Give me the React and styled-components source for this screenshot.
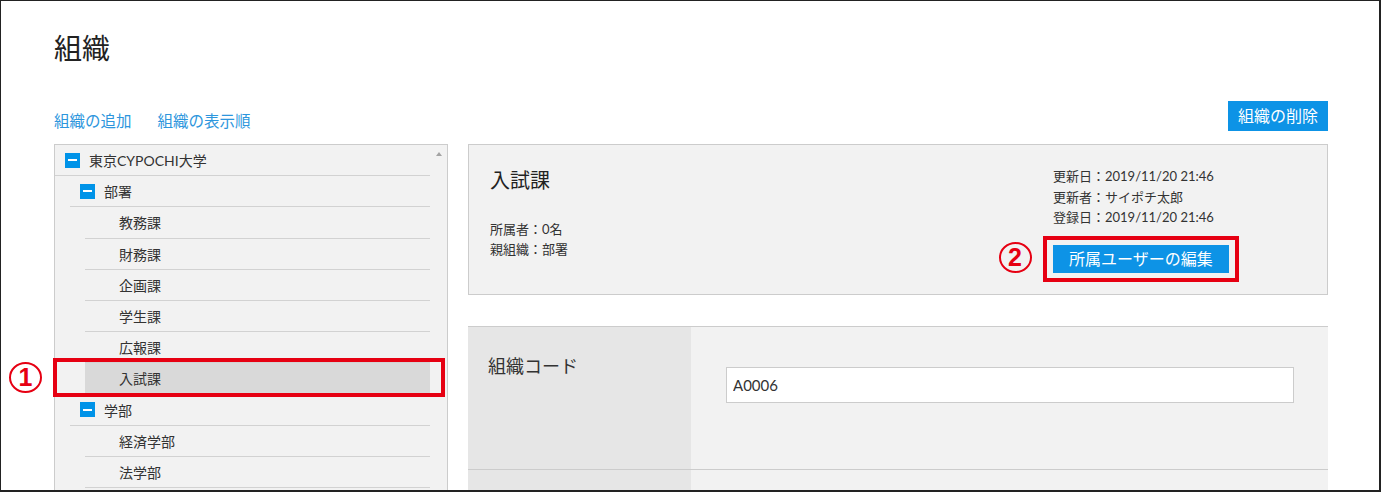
import React from "react";
import styled, { createGlobalStyle } from "styled-components";

const Global = createGlobalStyle`
  html, body { margin: 0; padding: 0; background: #fff; }
  body { font-family: Lato, "Noto Sans CJK JP", "Noto Sans", sans-serif; color: #333; }
  * { box-sizing: border-box; }
`;

const Frame = styled.div`
  width: 1381px;
  height: 492px;
  border-style: solid;
  border-color: #222;
  border-width: 1px 2px 2px 1px;
  padding: 0 51px 0 53px;
  overflow: hidden;
  background: #fff;
`;

const Title = styled.h1`
  margin: 0;
  padding-top: 30px;
  font-size: 28px;
  font-weight: 400;
  line-height: 34px;
  color: #222;
`;

const Toolbar = styled.div`
  margin-top: 36px;
  display: flex;
  justify-content: space-between;
  align-items: flex-start;
  height: 30px;
`;

const Links = styled.div`
  display: flex;
  gap: 26px;
  padding-top: 9px;
`;

const TextLink = styled.a`
  font-size: 15.5px;
  line-height: 23px;
  color: #2d96dd;
  text-decoration: none;
  cursor: pointer;
`;

const BlueButton = styled.button`
  border: none;
  background: #0d93e6;
  color: #fff;
  font-family: inherit;
  font-size: 16px;
  height: ${(p) => p.$h}px;
  padding: 0 ${(p) => p.$px}px;
  line-height: ${(p) => p.$h}px;
  cursor: pointer;
  white-space: nowrap;
`;

const Main = styled.div`
  margin-top: 13px;
  display: grid;
  grid-template-columns: 394px 1fr;
  column-gap: 20px;
  align-items: start;
`;

const TreePanel = styled.div`
  border: 1px solid #ccc;
  background: #f2f2f2;
  height: 420px;
  display: flex;
`;

const TreeList = styled.ul`
  list-style: none;
  margin: 0;
  padding: 0;
  flex: 1;
`;

const ScrollBar = styled.div`
  width: 17px;
  display: flex;
  justify-content: center;
  padding-top: 7px;
`;

const UpArrow = styled.div`
  width: 0;
  height: 0;
  border-left: 3.5px solid transparent;
  border-right: 3.5px solid transparent;
  border-bottom: 4px solid #a3a3a3;
`;

const Row = styled.li`
  position: relative;
  display: flex;
  align-items: center;
  gap: 9px;
  height: 31.2px;
  margin-left: ${(p) => p.$level * 15}px;
  padding-left: 10px;
  border-bottom: 1px solid ${(p) => (p.$selected ? "#d9d9d9" : "#d2d2d2")};
  background: ${(p) => (p.$selected ? "#d9d9d9" : "transparent")};
  font-size: 14px;
  color: #333;
`;

const Toggle = styled.span`
  position: relative;
  flex: none;
  width: 15px;
  height: 15px;
  background: ${(p) => (p.$leaf ? "transparent" : "#0093e8")};
  &::after {
    content: "";
    display: ${(p) => (p.$leaf ? "none" : "block")};
    position: absolute;
    left: 3px;
    top: 6.5px;
    width: 9px;
    height: 2px;
    background: #fff;
  }
`;

const RedBox = styled.div`
  position: absolute;
  left: ${(p) => p.$l}px;
  top: ${(p) => p.$t}px;
  right: ${(p) => p.$r}px;
  bottom: ${(p) => p.$b}px;
  border: 4px solid #e60012;
  pointer-events: none;
`;

const Badge = styled.span`
  position: absolute;
  left: ${(p) => p.$l}px;
  top: ${(p) => p.$t}px;
  width: 33px;
  height: 31px;
  border: 2px solid #e60012;
  border-radius: 50%;
  color: #e60012;
  font-family: "Liberation Sans", Arial, sans-serif;
  font-weight: 700;
  font-size: 25px;
  line-height: 27px;
  text-align: center;
`;

const RightCol = styled.div`
  display: flex;
  flex-direction: column;
`;

const InfoBox = styled.div`
  border: 1px solid #ccc;
  background: #f2f2f2;
  display: flex;
  justify-content: space-between;
  padding: 0 94px 12px 21px;
`;

const InfoMain = styled.div`
  padding-top: 23px;
`;

const InfoTitle = styled.div`
  font-size: 20px;
  line-height: 24px;
  color: #222;
`;

const MetaList = styled.div`
  margin-top: ${(p) => p.$mt}px;
  font-size: 13px;
  line-height: ${(p) => p.$lh}px;
  color: #333;
  white-space: nowrap;
`;

const InfoSide = styled.div`
  width: 180px;
  padding-top: 21px;
  display: flex;
  flex-direction: column;
  align-items: flex-start;
`;

const EditHighlight = styled.div`
  position: relative;
  margin-top: 8.5px;
  margin-left: -10.5px;
  border: 4px solid #e60012;
  padding: 5px 6.5px;
`;

const FormTable = styled.div`
  margin-top: 31px;
  border-top: 1px solid #ccc;
`;

const FormRow = styled.div`
  display: grid;
  grid-template-columns: 223px 1fr;
  height: ${(p) => p.$h}px;
  border-bottom: 1px solid #ccc;
`;

const Label = styled.div`
  background: #e6e6e6;
  padding: 26px 20px 0;
  font-size: 18px;
  line-height: 27px;
  color: #333;
`;

const Value = styled.div`
  background: #f2f2f2;
  padding: 40px 34px 0 35px;
`;

const TextInput = styled.input`
  display: block;
  width: 100%;
  height: 36px;
  border: 1px solid #ccc;
  background: #fff;
  padding: 0 6px;
  font-family: Lato, "Noto Sans CJK JP", sans-serif;
  font-size: 15px;
  color: #333;
  outline: none;
`;

const tree = [
  { label: "東京CYPOCHI大学", level: 0 },
  { label: "部署", level: 1 },
  { label: "教務課", level: 2, leaf: true },
  { label: "財務課", level: 2, leaf: true },
  { label: "企画課", level: 2, leaf: true },
  { label: "学生課", level: 2, leaf: true },
  { label: "広報課", level: 2, leaf: true },
  { label: "入試課", level: 2, leaf: true, selected: true },
  { label: "学部", level: 1 },
  { label: "経済学部", level: 2, leaf: true },
  { label: "法学部", level: 2, leaf: true },
];

export default function App() {
  return (
    <>
      <Global />
      <Frame>
        <Title>組織</Title>
        <Toolbar>
          <Links>
            <TextLink>組織の追加</TextLink>
            <TextLink>組織の表示順</TextLink>
          </Links>
          <BlueButton $h={30} $px={10}>組織の削除</BlueButton>
        </Toolbar>
        <Main>
          <TreePanel>
            <TreeList>
              {tree.map((n) => (
                <Row key={n.label} $level={n.level} $selected={n.selected}>
                  <Toggle $leaf={n.leaf} />
                  <span>{n.label}</span>
                  {n.selected && (
                    <>
                      <RedBox $l={-32} $t={-5.5} $r={-15} $b={-3.5} />
                      <Badge $l={-76} $t={-1.5}>1</Badge>
                    </>
                  )}
                </Row>
              ))}
            </TreeList>
            <ScrollBar>
              <UpArrow />
            </ScrollBar>
          </TreePanel>
          <RightCol>
            <InfoBox>
              <InfoMain>
                <InfoTitle>入試課</InfoTitle>
                <MetaList $mt={27} $lh={20}>
                  <div>所属者：0名</div>
                  <div>親組織：部署</div>
                </MetaList>
              </InfoMain>
              <InfoSide>
                <MetaList $mt={0} $lh={20.5}>
                  <div>更新日：2019/11/20 21:46</div>
                  <div>更新者：サイポチ太郎</div>
                  <div>登録日：2019/11/20 21:46</div>
                </MetaList>
                <EditHighlight>
                  <Badge $l={-48} $t={1.5}>2</Badge>
                  <BlueButton $h={28} $px={16}>所属ユーザーの編集</BlueButton>
                </EditHighlight>
              </InfoSide>
            </InfoBox>
            <FormTable>
              <FormRow $h={143}>
                <Label>組織コード</Label>
                <Value>
                  <TextInput defaultValue="A0006" readOnly />
                </Value>
              </FormRow>
              <FormRow $h={143}>
                <Label />
                <Value />
              </FormRow>
            </FormTable>
          </RightCol>
        </Main>
      </Frame>
    </>
  );
}
